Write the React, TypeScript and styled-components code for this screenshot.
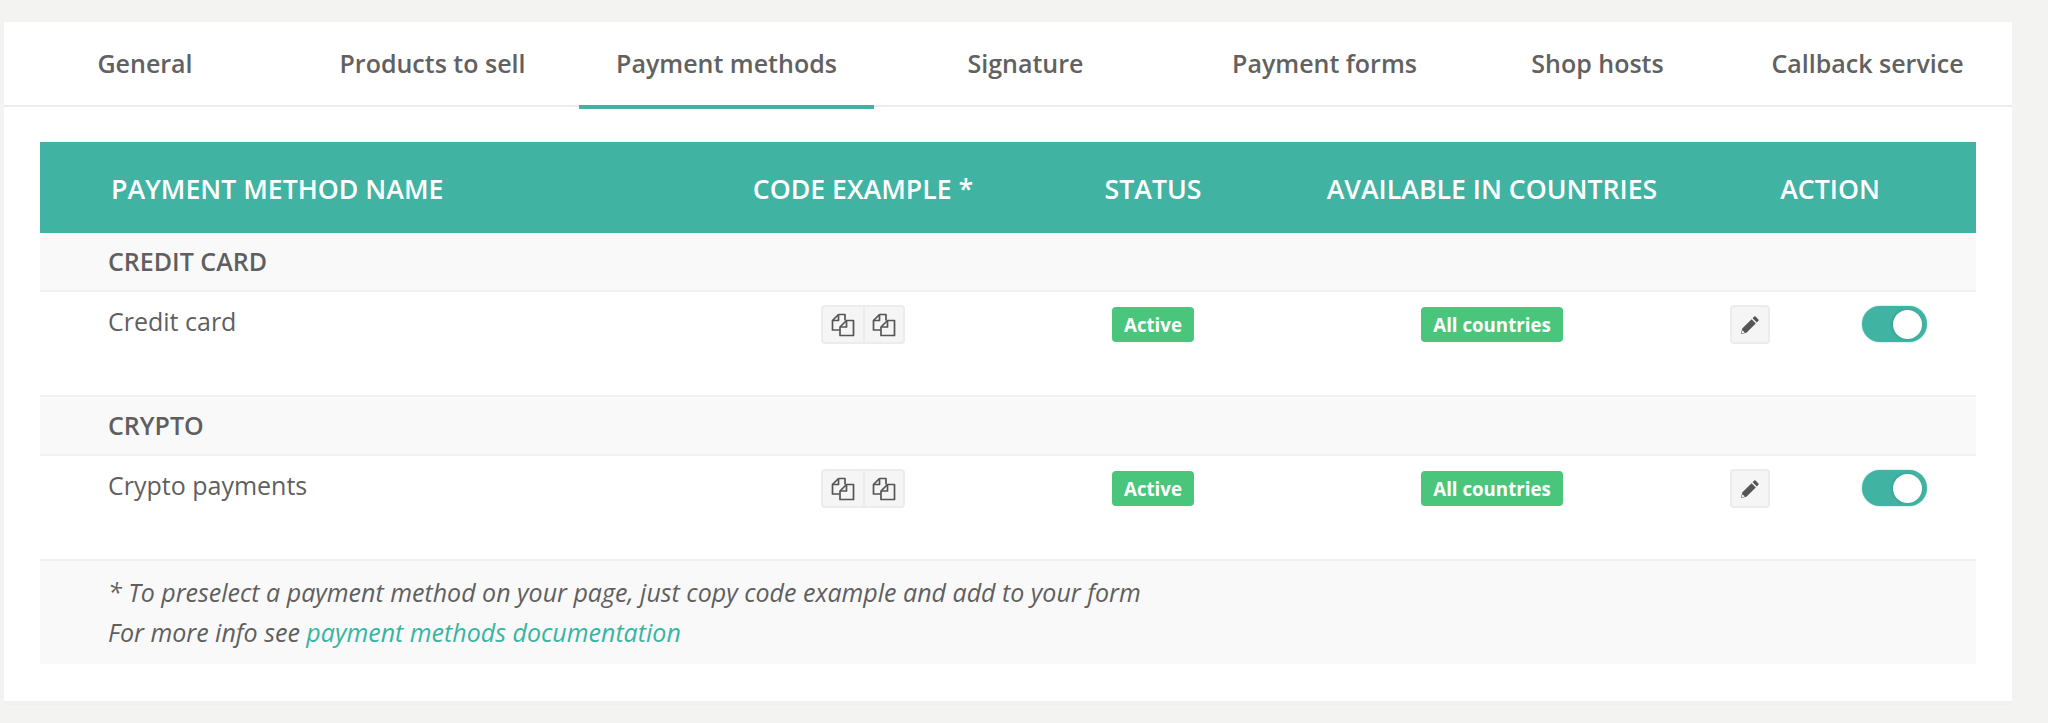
import React from 'react'
import styled, { createGlobalStyle } from 'styled-components'

const GlobalStyle = createGlobalStyle`
  html, body {
    margin: 0;
    padding: 0;
    background: #f3f3f2;
    font-family: "Open Sans", "Noto Sans", sans-serif;
    color: #5f5f5f;
  }
  * { box-sizing: border-box; }
`

const Page = styled.div`
  width: 2048px;
  height: 723px;
  padding: 22px 36px 0 4px;
  overflow: hidden;
`

const Card = styled.div`
  width: 2008px;
  height: 683px;
  background: #fff;
  border-bottom: 4px solid #eef0f1;
`

const Tabs = styled.nav`
  display: grid;
  grid-template-columns: 282px 293px 295px 303px 295px 251px 289px;
  height: 85px;
  border-bottom: 2px solid #ececec;
`

const Tab = styled.a<{ $active?: boolean }>`
  display: flex;
  align-items: center;
  justify-content: center;
  height: 87px;
  padding-bottom: 2px;
  font-size: 25px;
  font-weight: 600;
  color: #616161;
  border-bottom: 4px solid ${p => (p.$active ? '#41b3a3' : 'transparent')};
`

const Body = styled.div`
  padding: 35px 36px 0;
`

const columns = '680px 286px 294px 384px 292px'

const HeadRow = styled.div`
  display: grid;
  grid-template-columns: ${columns};
  align-items: center;
  height: 91px;
  padding-top: 1px;
  background: #41b3a3;
  color: #fff;
  font-size: 26.7px;
  font-weight: 600;
  text-transform: uppercase;
`

const HeadCell = styled.div<{ $left?: boolean }>`
  text-align: ${p => (p.$left ? 'left' : 'center')};
  padding-left: ${p => (p.$left ? '71px' : '0')};
`

const GroupRow = styled.div`
  display: flex;
  align-items: center;
  height: 59px;
  padding: 0 0 1px 68px;
  background: #f9f9f9;
  border-bottom: 2px solid #f1f1f1;
  font-size: 25px;
  font-weight: 600;
  color: #5f5f5f;
  text-transform: uppercase;
`

const ItemRow = styled.div`
  display: grid;
  grid-template-columns: ${columns};
  align-items: start;
  height: 105px;
  padding-top: 13px;
  border-bottom: 2px solid #f1f1f1;
`

const NameCell = styled.div`
  padding-left: 68px;
  font-size: 25px;
  line-height: 32px;
  color: #5f5f5f;
`

const CenterCell = styled.div`
  display: flex;
  justify-content: center;
`

const ActionCell = styled.div`
  display: flex;
  align-items: flex-start;
  justify-content: space-between;
  padding: 0 49px 0 46px;
`

const ButtonGroup = styled.div`
  display: flex;
  height: 39px;
  border: 2px solid #ececec;
  border-radius: 4px;
  background: #f5f5f5;
`

const IconButton = styled.span`
  display: flex;
  align-items: center;
  justify-content: center;
  width: 40px;
  & + & {
    border-left: 2px solid #ececec;
  }
`

const EditButton = styled.span`
  display: flex;
  align-items: center;
  justify-content: center;
  width: 40px;
  height: 39px;
  border: 2px solid #ececec;
  border-radius: 4px;
  background: #f5f5f5;
`

const Badge = styled.span`
  display: inline-flex;
  align-items: center;
  height: 35px;
  margin-top: 2px;
  padding: 0 12px;
  border-radius: 4px;
  background: #4ac67c;
  color: #fff;
  font-size: 18.7px;
  font-weight: 700;
`

const Toggle = styled.span`
  display: flex;
  align-items: center;
  justify-content: flex-end;
  width: 65px;
  height: 36px;
  margin-top: 1px;
  padding-right: 5px;
  border-radius: 18px;
  background: #41b3a3;
  box-shadow: 0 0 2px rgba(65, 179, 163, 0.6);
`

const Knob = styled.span`
  width: 29px;
  height: 29px;
  border-radius: 50%;
  background: #fff;
  box-shadow: -1px 0 3px rgba(0, 0, 0, 0.15);
`

const Footer = styled.div`
  height: 103px;
  padding: 11px 0 0 68px;
  background: #f9f9f9;
  font-size: 25px;
  font-style: italic;
  line-height: 40px;
  color: #5f5f5f;
`

const DocLink = styled.a`
  color: #36b5a2;
`

const CopyIcon = () => (
  <svg width="24" height="24" viewBox="0 0 24 24" fill="none" stroke="#555" strokeWidth="1.7" strokeLinejoin="round">
    <path d="M7.5 1.5h6.5v6M7.5 1.5L1.5 7.5v9.5h7" />
    <path d="M7.5 1.5V7.5H1.5" />
    <path d="M15.5 7.5H22.5V22.5H9V14L15.5 7.5Z" fill="#f5f5f5" />
    <path d="M15.5 7.5V14H9" />
  </svg>
)

const PencilIcon = () => (
  <svg width="20" height="20" viewBox="0 0 20 20">
    <path d="M14.2 1.6a1 1 0 0 1 1.4 0l2.8 2.8a1 1 0 0 1 0 1.4l-1.6 1.6-4.2-4.2zM11.6 4.2l4.2 4.2-9.4 9.4-5.4 1.2 1.2-5.4z" fill="#555" />
    <path d="M2.4 15.2l2.4 2.4-3.2.8z" fill="#f5f5f5" />
  </svg>
)

const groups = [
  { title: 'Credit card', method: 'Credit card' },
  { title: 'Crypto', method: 'Crypto payments' },
]

const tabs = ['General', 'Products to sell', 'Payment methods', 'Signature', 'Payment forms', 'Shop hosts', 'Callback service']

export default function App() {
  return (
    <Page>
      <GlobalStyle />
      <Card>
        <Tabs>
          {tabs.map(t => (
            <Tab key={t} $active={t === 'Payment methods'}>{t}</Tab>
          ))}
        </Tabs>
        <Body>
          <HeadRow>
            <HeadCell $left>Payment method name</HeadCell>
            <HeadCell>Code example *</HeadCell>
            <HeadCell>Status</HeadCell>
            <HeadCell>Available in countries</HeadCell>
            <HeadCell>Action</HeadCell>
          </HeadRow>
          {groups.map(g => (
            <React.Fragment key={g.title}>
              <GroupRow>{g.title}</GroupRow>
              <ItemRow>
                <NameCell>{g.method}</NameCell>
                <CenterCell>
                  <ButtonGroup>
                    <IconButton><CopyIcon /></IconButton>
                    <IconButton><CopyIcon /></IconButton>
                  </ButtonGroup>
                </CenterCell>
                <CenterCell><Badge>Active</Badge></CenterCell>
                <CenterCell><Badge>All countries</Badge></CenterCell>
                <ActionCell>
                  <EditButton><PencilIcon /></EditButton>
                  <Toggle><Knob /></Toggle>
                </ActionCell>
              </ItemRow>
            </React.Fragment>
          ))}
          <Footer>
            * To preselect a payment method on your page, just copy code example and add to your form
            <br />
            For more info see <DocLink>payment methods documentation</DocLink>
          </Footer>
        </Body>
      </Card>
    </Page>
  )
}
